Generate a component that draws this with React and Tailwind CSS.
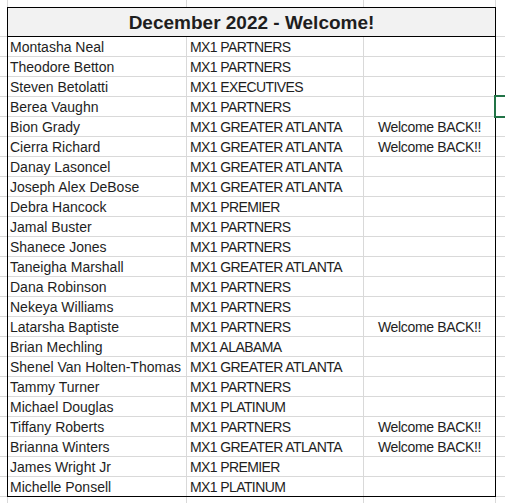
import React from "react";

const rows = [
  ["Montasha Neal", "MX1 PARTNERS", ""],
  ["Theodore Betton", "MX1 PARTNERS", ""],
  ["Steven Betolatti", "MX1 EXECUTIVES", ""],
  ["Berea Vaughn", "MX1 PARTNERS", ""],
  ["Bion Grady", "MX1 GREATER ATLANTA", "Welcome BACK!!"],
  ["Cierra Richard", "MX1 GREATER ATLANTA", "Welcome BACK!!"],
  ["Danay Lasoncel", "MX1 GREATER ATLANTA", ""],
  ["Joseph Alex DeBose", "MX1 GREATER ATLANTA", ""],
  ["Debra Hancock", "MX1 PREMIER", ""],
  ["Jamal Buster", "MX1 PARTNERS", ""],
  ["Shanece Jones", "MX1 PARTNERS", ""],
  ["Taneigha Marshall", "MX1 GREATER ATLANTA", ""],
  ["Dana Robinson", "MX1 PARTNERS", ""],
  ["Nekeya Williams", "MX1 PARTNERS", ""],
  ["Latarsha Baptiste", "MX1 PARTNERS", "Welcome BACK!!"],
  ["Brian Mechling", "MX1 ALABAMA", ""],
  ["Shenel Van Holten-Thomas", "MX1 GREATER ATLANTA", ""],
  ["Tammy Turner", "MX1 PARTNERS", ""],
  ["Michael Douglas", "MX1 PLATINUM", ""],
  ["Tiffany Roberts", "MX1 PARTNERS", "Welcome BACK!!"],
  ["Brianna Winters", "MX1 GREATER ATLANTA", "Welcome BACK!!"],
  ["James Wright Jr", "MX1 PREMIER", ""],
  ["Michelle Ponsell", "MX1 PLATINUM", ""],
];

function Strip({ h }) {
  return (
    <div className={`flex ${h} shrink-0`}>
      <div className="w-[7px] shrink-0" />
      <div className="w-[179px] shrink-0 border-l border-[#d9d9d9]" />
      <div className="w-[177px] shrink-0 border-l border-[#d9d9d9]" />
      <div className="w-[132px] shrink-0 border-l border-[#d9d9d9]" />
      <div className="flex-1 border-l border-[#d9d9d9]" />
    </div>
  );
}

function SideStrip({ w }) {
  return (
    <div className={`flex flex-col ${w} shrink-0`}>
      <div className="h-[30px] border-b border-[#d9d9d9]" />
      {rows.map((_, i) => (
        <div key={i} className="h-[20px] border-b border-[#d9d9d9]" />
      ))}
    </div>
  );
}

export default function App() {
  return (
    <div
      className="relative w-[505px] h-[503px] overflow-hidden bg-white text-[#1e1e1e]"
      style={{ fontFamily: '"Liberation Sans", Arial, sans-serif' }}
    >
      <Strip h="h-[7px]" />
      <div className="flex">
        <SideStrip w="w-[7px]" />
        <div className="flex flex-col w-[489px] shrink-0 border border-black">
          <div className="h-[29px] border-b border-black bg-[#f2f2f2] text-center text-[19px] font-bold leading-[26px] pt-[2px]">
            December 2022 - Welcome!
          </div>
          {rows.map((r, i) => (
            <div
              key={i}
              className={`flex text-[14px] leading-[19px] ${
                i === rows.length - 1 ? "h-[19px]" : "h-[20px] border-b border-[#d9d9d9]"
              }`}
            >
              <div className="w-[179px] shrink-0 border-r border-[#d9d9d9] pl-[2px] pt-[1px] whitespace-nowrap overflow-hidden">
                {r[0]}
              </div>
              <div className="w-[177px] shrink-0 border-r border-[#d9d9d9] pl-[3px] pt-[1px] whitespace-nowrap overflow-hidden tracking-[-0.6px]">
                {r[1]}
              </div>
              <div className="flex-1 text-center pt-[1px] whitespace-nowrap overflow-hidden tracking-[-0.35px]">
                {r[2]}
              </div>
            </div>
          ))}
        </div>
        <SideStrip w="flex-1" />
      </div>
      <Strip h="h-[6px]" />
      <div className="absolute left-[494px] top-[95px] w-[30px] h-[23px] border-2 border-[#217346]" />
    </div>
  );
}
